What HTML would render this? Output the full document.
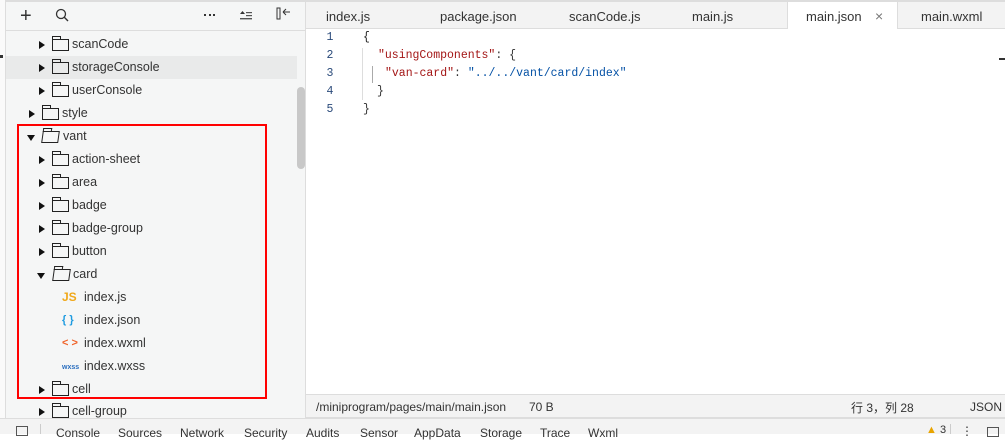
<!DOCTYPE html><html><head><meta charset="utf-8"><style>
*{margin:0;padding:0;box-sizing:border-box}
body{width:1005px;height:434px;overflow:hidden;background:#fff;font-family:"Liberation Sans",sans-serif;font-size:12px;color:#333;position:relative}
.a{position:absolute}
.row{position:absolute;left:6px;width:291px;height:23px;line-height:23px}
.tri{position:absolute;top:8px;width:0;height:0;border-top:4px solid transparent;border-bottom:4px solid transparent;border-left:6px solid #111}
.trid{position:absolute;top:10px;width:0;height:0;border-left:4px solid transparent;border-right:4px solid transparent;border-top:6px solid #111}
.fold{position:absolute;top:6px;width:17px;height:12px;border:1px solid #222}
.fold:before{content:"";position:absolute;left:-1px;top:-4px;width:7px;height:3px;border:1px solid #222;border-bottom:none}
.t{position:absolute;top:0;font-size:12.5px;color:#333}
.tab{position:absolute;top:5px;height:23px;line-height:23px;font-size:13px;color:#333}
.code{position:absolute;font-family:"Liberation Mono",monospace;font-size:11.5px;height:18px;line-height:18px}
.ln{position:absolute;left:320px;width:20px;text-align:center;color:#2a4a7a;font-family:"Liberation Mono",monospace;font-size:11.5px}
.bt{position:absolute;top:426px;font-size:12px;color:#333;white-space:nowrap}
</style></head><body>
<div class="a" style="left:0;top:0;width:6px;height:434px;background:#fafafa;border-right:1px solid #ddd"></div>
<div class="a" style="left:0;top:55px;width:3px;height:3px;background:#333"></div>
<div class="a" style="left:6px;top:0;width:300px;height:420px;background:#f5f6f6;border-right:1px solid #ddd"></div>
<div class="a" style="left:6px;top:0;width:300px;height:2px;background:#ddd"></div>
<div class="a" style="left:6px;top:30px;width:300px;height:1px;background:#ddd"></div>
<div class="a" style="left:20px;top:7px;font-size:20px;line-height:18px;font-weight:300">+</div>
<svg class="a" style="left:55px;top:8px" width="14" height="14"><circle cx="6" cy="6" r="4.5" fill="none" stroke="#333" stroke-width="1.3"/><line x1="9.3" y1="9.3" x2="13" y2="13" stroke="#333" stroke-width="1.4"/></svg>
<div class="a" style="left:204px;top:14px;width:11px;height:2px;border-left:2px solid #333;border-right:2px solid #333;background:linear-gradient(90deg,transparent 3px,#333 3px,#333 5px,transparent 5px)"></div>
<svg class="a" style="left:239px;top:9px" width="14" height="12"><path d="M1 5L3.5 2L6 5Z" fill="#333"/><rect x="7" y="3" width="6" height="1.2" fill="#555"/><rect x="7" y="6" width="6" height="1.2" fill="#555"/><rect x="1" y="9" width="12" height="1.4" fill="#555"/></svg>
<svg class="a" style="left:276px;top:7px" width="16" height="14"><rect x="1" y="1" width="3" height="11" fill="none" stroke="#333"/><path d="M7 5H14M7 5L10 2M7 5L10 8" fill="none" stroke="#333"/></svg>
<div class="a" style="left:297px;top:87px;width:8px;height:82px;background:#c8c8c8;border-radius:4px"></div>
<div class="row" style="top:56px;background:#e9eaea"></div>

<div class="row" style="top:33px"><div class="tri" style="left:33px"></div><div class="fold" style="left:46px"></div><div class="t" style="left:66px">scanCode</div></div>
<div class="row" style="top:56px"><div class="tri" style="left:33px"></div><div class="fold" style="left:46px"></div><div class="t" style="left:66px">storageConsole</div></div>
<div class="row" style="top:79px"><div class="tri" style="left:33px"></div><div class="fold" style="left:46px"></div><div class="t" style="left:66px">userConsole</div></div>
<div class="row" style="top:102px"><div class="tri" style="left:23px"></div><div class="fold" style="left:36px"></div><div class="t" style="left:56px">style</div></div>
<div class="row" style="top:125px"><div class="trid" style="left:21px"></div><div class="fold" style="left:36px;transform:skewX(-8deg)"></div><div class="t" style="left:57px">vant</div></div>
<div class="row" style="top:148px"><div class="tri" style="left:33px"></div><div class="fold" style="left:46px"></div><div class="t" style="left:66px">action-sheet</div></div>
<div class="row" style="top:171px"><div class="tri" style="left:33px"></div><div class="fold" style="left:46px"></div><div class="t" style="left:66px">area</div></div>
<div class="row" style="top:194px"><div class="tri" style="left:33px"></div><div class="fold" style="left:46px"></div><div class="t" style="left:66px">badge</div></div>
<div class="row" style="top:217px"><div class="tri" style="left:33px"></div><div class="fold" style="left:46px"></div><div class="t" style="left:66px">badge-group</div></div>
<div class="row" style="top:240px"><div class="tri" style="left:33px"></div><div class="fold" style="left:46px"></div><div class="t" style="left:66px">button</div></div>
<div class="row" style="top:263px"><div class="trid" style="left:31px"></div><div class="fold" style="left:47px;transform:skewX(-8deg)"></div><div class="t" style="left:67px">card</div></div>
<div class="row" style="top:286px"><div class="a" style="left:56px;top:0;color:#f0a81a;font-size:12px;font-weight:bold">JS</div><div class="t" style="left:78px">index.js</div></div>
<div class="row" style="top:309px"><div class="a" style="left:56px;top:0;color:#1e9be0;font-size:11px;font-weight:bold">{ }</div><div class="t" style="left:78px">index.json</div></div>
<div class="row" style="top:332px"><div class="a" style="left:56px;top:0;color:#f0632a;font-size:11px;font-weight:bold">&lt; &gt;</div><div class="t" style="left:78px">index.wxml</div></div>
<div class="row" style="top:355px"><div class="a" style="left:56px;top:1px;color:#2a6ebf;font-size:7px;font-weight:bold">wxss</div><div class="t" style="left:78px">index.wxss</div></div>
<div class="row" style="top:378px"><div class="tri" style="left:33px"></div><div class="fold" style="left:46px"></div><div class="t" style="left:66px">cell</div></div>
<div class="row" style="top:400px"><div class="tri" style="left:33px"></div><div class="fold" style="left:46px"></div><div class="t" style="left:66px">cell-group</div></div>
<div class="a" style="left:17px;top:124px;width:250px;height:275px;border:2px solid #f00"></div>

<div class="a" style="left:306px;top:0;width:699px;height:29px;background:#f3f3f3;border-top:2px solid #ddd;border-bottom:1px solid #ddd"></div>
<div class="a" style="left:787px;top:2px;width:111px;height:27px;background:#fff;border-left:1px solid #ddd;border-right:1px solid #ddd"></div>
<div class="tab" style="left:326px">index.js</div>
<div class="tab" style="left:440px">package.json</div>
<div class="tab" style="left:569px">scanCode.js</div>
<div class="tab" style="left:692px">main.js</div>
<div class="tab" style="left:806px">main.json</div>
<div class="tab" style="left:875px;color:#777;font-size:14px">×</div>
<div class="tab" style="left:921px">main.wxml</div>
<div class="a" style="left:999px;top:58px;width:6px;height:2px;background:#333"></div>
<div class="ln" style="top:29px;line-height:18px">1<br>2<br>3<br>4<br>5</div>
<div class="a" style="left:362px;top:48px;width:1px;height:52px;background:#ddd"></div>
<div class="a" style="left:372px;top:66px;width:1px;height:17px;background:#aaa"></div>
<div class="code" style="left:363px;top:29px;color:#222">{</div>
<div class="code" style="left:378px;top:47px"><span style="color:#a31515">"usingComponents"</span>: {</div>
<div class="code" style="left:385px;top:65px"><span style="color:#a31515">"van-card"</span>: <span style="color:#0451a5">"../../vant/card/index"</span></div>
<div class="code" style="left:377px;top:83px">}</div>
<div class="code" style="left:363px;top:101px">}</div>
<div class="a" style="left:306px;top:394px;width:699px;height:24px;background:#f3f3f3;border-top:1px solid #ddd;border-bottom:1px solid #ddd"></div>
<div class="a" style="left:316px;top:400px;font-size:12px">/miniprogram/pages/main/main.json</div>
<div class="a" style="left:529px;top:400px;font-size:12px">70 B</div>
<div class="a" style="left:851px;top:399px;font-size:12px;font-family:'Liberation Sans','Noto Sans CJK SC',sans-serif">行 3，列 28</div>
<div class="a" style="left:970px;top:400px;font-size:12px">JSON</div>
<div class="a" style="left:0;top:418px;width:1005px;height:16px;background:#f3f3f3;border-top:1px solid #ddd"></div>
<div class="a" style="left:16px;top:426px;width:12px;height:10px;border:1px solid #555"></div>
<div class="a" style="left:40px;top:424px;width:1px;height:10px;background:#ccc"></div>
<div class="bt" style="left:56px">Console</div>
<div class="bt" style="left:118px">Sources</div>
<div class="bt" style="left:180px">Network</div>
<div class="bt" style="left:244px">Security</div>
<div class="bt" style="left:306px">Audits</div>
<div class="bt" style="left:360px">Sensor</div>
<div class="bt" style="left:414px">AppData</div>
<div class="bt" style="left:480px">Storage</div>
<div class="bt" style="left:540px">Trace</div>
<div class="bt" style="left:588px">Wxml</div>
<div class="a" style="left:926px;top:424px;font-size:11px;color:#e8a400">▲<span style="color:#333"> 3</span></div>
<div class="a" style="left:950px;top:424px;width:1px;height:10px;background:#ccc"></div>
<div class="a" style="left:961px;top:424px;font-size:12px">⋮</div>
<div class="a" style="left:987px;top:427px;width:12px;height:10px;border:1px solid #555"></div>
</body></html>
